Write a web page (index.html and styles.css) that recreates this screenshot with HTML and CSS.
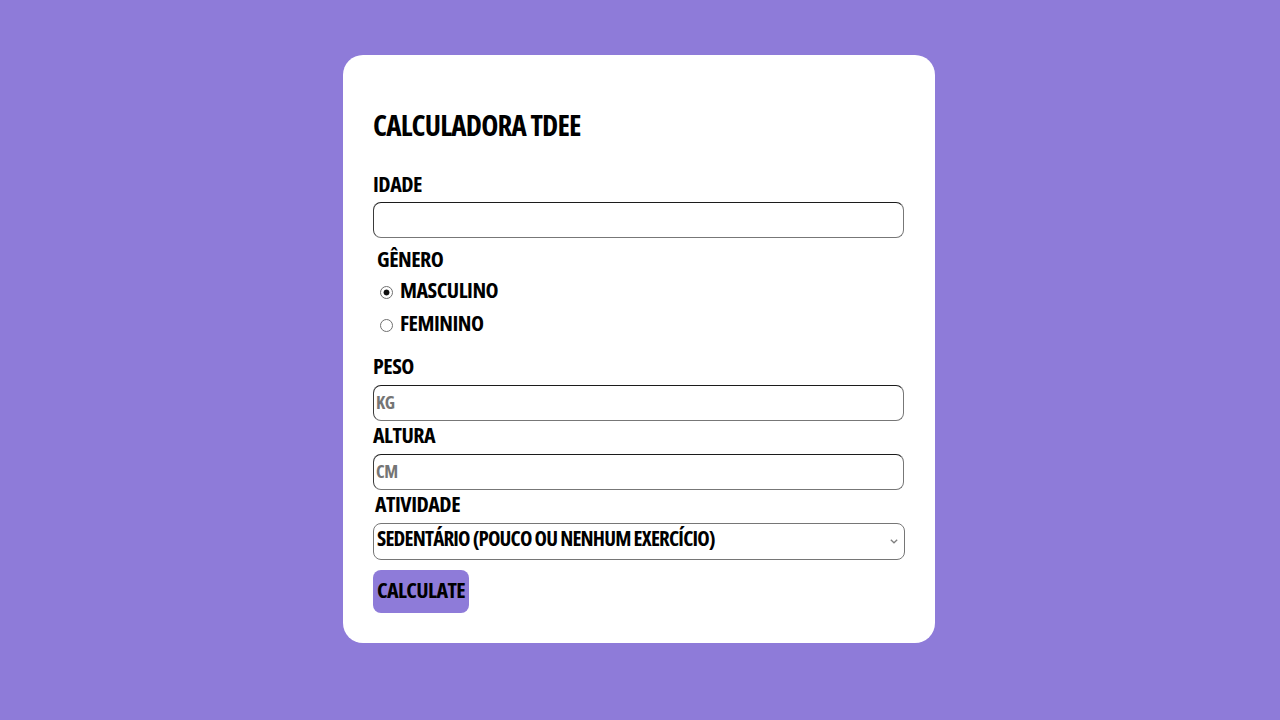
FILE: index.html
```html
<!DOCTYPE html>
<html lang="pt-BR">
<head>
<meta charset="utf-8">
<title>Calculadora TDEE</title>
<link rel="stylesheet" href="styles.css">
</head>
<body>
<main class="card">
  <h1 class="title">CALCULADORA TDEE</h1>
  <form class="form">
    <label class="label" for="idade">IDADE</label>
    <input class="field" id="idade" type="number">

    <div class="group">
      <span class="label label-indent">GÊNERO</span>
      <label class="radio-row"><input class="radio" type="radio" name="genero" checked><span class="radio-text">MASCULINO</span></label>
      <label class="radio-row"><input class="radio" type="radio" name="genero"><span class="radio-text">FEMININO</span></label>
    </div>

    <label class="label label-peso" for="peso">PESO</label>
    <input class="field" id="peso" type="number" placeholder="KG">

    <label class="label label-tight" for="altura">ALTURA</label>
    <input class="field" id="altura" type="number" placeholder="CM">

    <label class="label label-tight label-act" for="atividade">ATIVIDADE</label>
    <select class="select" id="atividade">
      <option>SEDENTÁRIO (POUCO OU NENHUM EXERCÍCIO)</option>
      <option>LEVEMENTE ATIVO (1-3 DIAS POR SEMANA)</option>
      <option>MODERADAMENTE ATIVO (3-5 DIAS POR SEMANA)</option>
      <option>MUITO ATIVO (6-7 DIAS POR SEMANA)</option>
      <option>EXTREMAMENTE ATIVO (ATLETA)</option>
    </select>

    <button class="button" type="button">CALCULATE</button>
  </form>
</main>
</body>
</html>
```
FILE: styles.css
```css
html, body {
  margin: 0;
  padding: 0;
}
body {
  background: #8e7bd9;
  min-height: 720px;
  padding-right: 2px;
  font-family: "Open Sans", "Roboto", sans-serif;
  font-stretch: 75%;
  font-weight: 700;
  color: #000;
  display: flex;
  justify-content: center;
  align-items: flex-start;
}
.card {
  width: 532px;
  margin-top: 55px;
  padding: 30px;
  background: #fff;
  border-radius: 20px;
}
.title {
  margin: 20px 0 0;
  font-size: 29px;
  line-height: 39px;
  height: 40px;
  letter-spacing: -0.8px;
  font-weight: 700;
}
.form {
  display: flex;
  flex-direction: column;
  align-items: flex-start;
  margin-top: 27px;
}
.label {
  display: block;
  font-size: 22px;
  line-height: 22px;
  height: 26px;
  letter-spacing: -0.5px;
  margin-bottom: 4px;
}
.label-indent {
  padding-left: 4px;
  margin-bottom: 1px;
}
.label-peso {
  margin-top: 14px;
  margin-bottom: 5px;
}
.label-tight {
  margin-top: 2px;
  margin-bottom: 5px;
}
.label-act {
  padding-left: 2px;
}
.field {
  box-sizing: border-box;
  width: 531px;
  height: 36px;
  margin: 0;
  padding: 0 2px 2px;
  border-style: solid;
  border-width: 1px;
  border-color: #1c1c1c #777 #777 #3a3a3a;
  border-radius: 8px;
  background: #fff;
  font-family: inherit;
  font-stretch: 75%;
  font-weight: 700;
  font-size: 18px;
  letter-spacing: -0.4px;
  outline: none;
  -moz-appearance: textfield;
}
.field::-webkit-outer-spin-button,
.field::-webkit-inner-spin-button {
  -webkit-appearance: none;
  margin: 0;
}
.field::placeholder {
  color: #757575;
}
.group {
  display: flex;
  flex-direction: column;
  align-items: flex-start;
  margin-top: 9px;
}
.radio-row {
  display: flex;
  align-items: center;
  height: 33px;
  padding-left: 7px;
  font-size: 22px;
  letter-spacing: -0.5px;
}
.radio-text {
  padding-bottom: 3px;
}
.radio {
  appearance: none;
  -webkit-appearance: none;
  box-sizing: border-box;
  width: 13px;
  height: 13px;
  margin: 3px 7px 0 0;
  border: 1px solid #707070;
  border-radius: 50%;
  background: #fff;
}
.radio:checked {
  background: radial-gradient(circle, #111 0 2.6px, #fff 3.3px);
}
.select {
  appearance: none;
  -webkit-appearance: none;
  box-sizing: border-box;
  width: 532px;
  height: 37px;
  margin: 0;
  padding: 0 0 9px 3px;
  border: 1px solid #767676;
  border-radius: 8px;
  background-color: #fff;
  background-image: url("data:image/svg+xml;utf8,<svg xmlns='http://www.w3.org/2000/svg' width='8' height='5' viewBox='0 0 8 5'><path d='M0.8 0.8 L4 3.8 L7.2 0.8' fill='none' stroke='%23808080' stroke-width='1.3'/></svg>");
  background-repeat: no-repeat;
  background-position: right 6px center;
  background-size: 8px 5px;
  color: #000;
  font-family: inherit;
  font-stretch: 75%;
  font-weight: 700;
  font-size: 21px;
  letter-spacing: -0.8px;
}
.button {
  margin-top: 10px;
  height: 43px;
  padding: 0 4px 5px;
  border: none;
  border-radius: 8px;
  background: #8e7bd9;
  color: #000;
  font-family: inherit;
  font-stretch: 75%;
  font-weight: 700;
  font-size: 22px;
  letter-spacing: -0.6px;
  line-height: 38px;
}
```
